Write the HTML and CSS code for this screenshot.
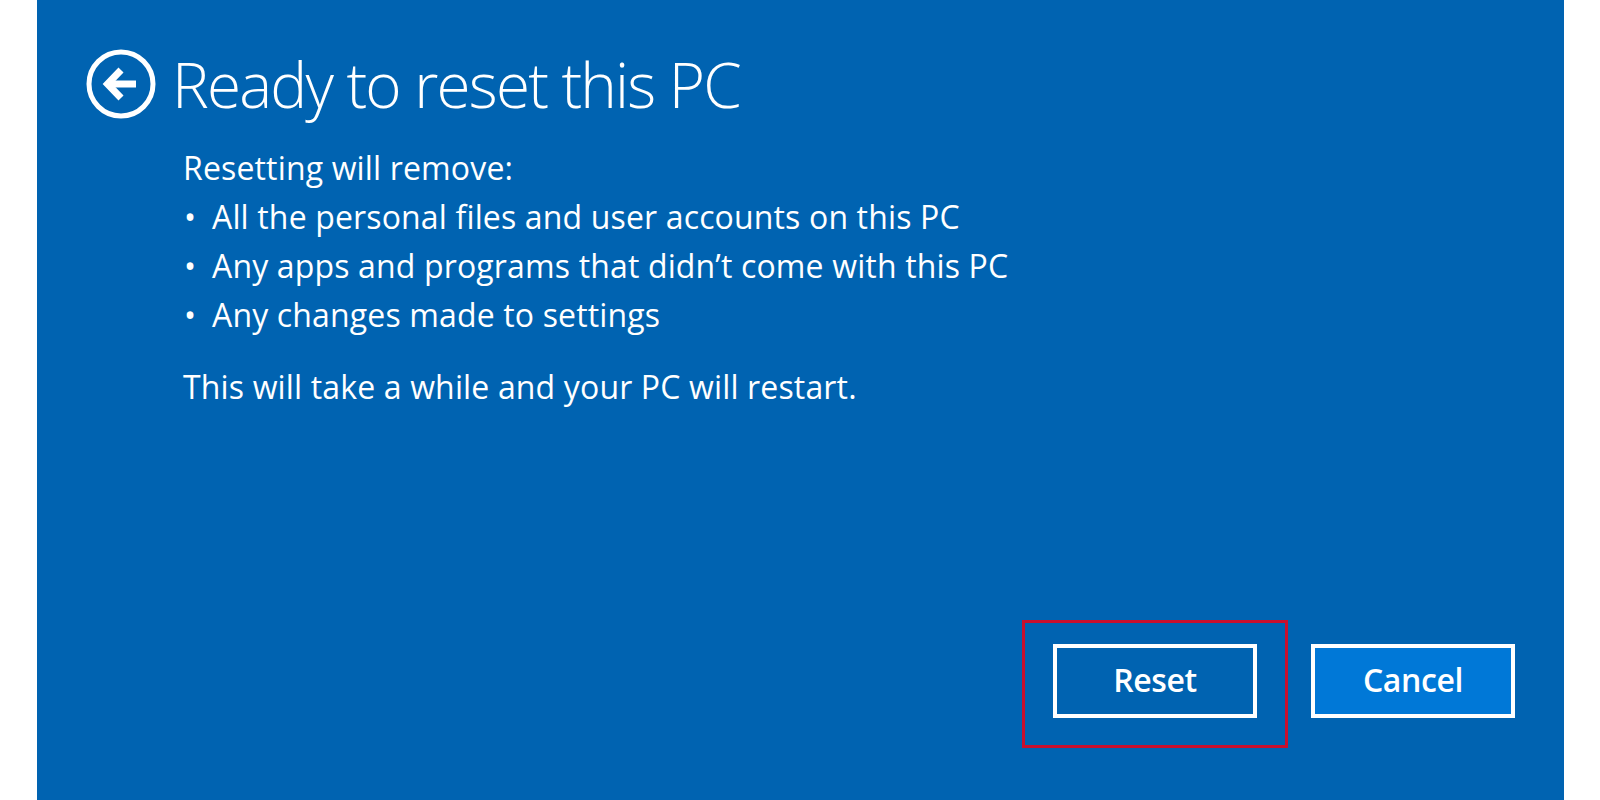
FILE: index.html
```html
<!DOCTYPE html>
<html lang="en">
<head>
<meta charset="utf-8">
<title>Ready to reset this PC</title>
<link rel="stylesheet" href="styles.css">
</head>
<body>
<main class="panel">
  <header class="header">
    <svg class="back" width="72" height="72" viewBox="0 0 72 72" aria-hidden="true">
      <circle cx="36" cy="36" r="32" fill="none" stroke="#fff" stroke-width="5"/>
      <path d="M22 36 H51" stroke="#fff" stroke-width="7" fill="none"/>
      <path d="M36 22 L22.5 36 L36 50" stroke="#fff" stroke-width="7" fill="none" stroke-linejoin="miter"/>
    </svg>
    <h1 class="title">Ready to reset this PC</h1>
  </header>
  <section class="content">
    <p class="lead">Resetting will remove:</p>
    <ul class="list">
      <li>All the personal files and user accounts on this PC</li>
      <li>Any apps and programs that didn’t come with this PC</li>
      <li>Any changes made to settings</li>
    </ul>
    <p class="note">This will take a while and your PC will restart.</p>
  </section>
  <footer class="actions">
    <div class="highlight-wrap">
      <button class="btn btn-reset">Reset</button>
      <span class="highlight"></span>
    </div>
    <button class="btn btn-cancel">Cancel</button>
  </footer>
</main>
</body>
</html>
```
FILE: styles.css
```css
html, body {
  margin: 0;
  padding: 0;
  background: #ffffff;
}
body {
  width: 1600px;
  height: 800px;
  overflow: hidden;
}
.panel {
  margin-left: 37px;
  width: 1527px;
  height: 800px;
  background: #0063b1;
  color: #ffffff;
  font-family: "Open Sans", "Noto Sans", sans-serif;
  display: flex;
  flex-direction: column;
  box-sizing: border-box;
  padding: 48px 49px 0 48px;
}
.header {
  display: flex;
  align-items: center;
  gap: 15px;
}
.back {
  display: block;
  flex: none;
}
.title {
  margin: 0;
  font-weight: 350;
  font-size: 62px;
  line-height: 70px;
  letter-spacing: -1.8px;
}
.content {
  padding-left: 98px;
  margin-top: 23px;
  font-size: 32px;
  letter-spacing: 0.15px;
  line-height: 49px;
}
.lead, .note {
  margin: 0;
}
.list {
  margin: 0;
  padding: 0;
  list-style: none;
}
.list li {
  position: relative;
  padding-left: 29px;
}
.list li::before {
  content: "•";
  position: absolute;
  left: 1px;
}
.note {
  margin-top: 23px;
}
.actions {
  margin-top: auto;
  margin-bottom: 82px;
  display: flex;
  justify-content: flex-end;
  gap: 54px;
}
.highlight-wrap {
  position: relative;
}
.btn {
  display: block;
  width: 204px;
  height: 74px;
  box-sizing: border-box;
  border: 4px solid #ffffff;
  color: #ffffff;
  font-family: "Open Sans", "Noto Sans", sans-serif;
  font-weight: 600;
  font-size: 32px;
  letter-spacing: -0.4px;
  padding: 0 0 4px 0;
}
.btn-reset {
  background: #0063b1;
}
.btn-cancel {
  background: #0078d7;
}
.highlight {
  position: absolute;
  left: -31px;
  top: -24px;
  width: 266px;
  height: 128px;
  box-sizing: border-box;
  border: 3px solid #c8102e;
  pointer-events: none;
}
```
